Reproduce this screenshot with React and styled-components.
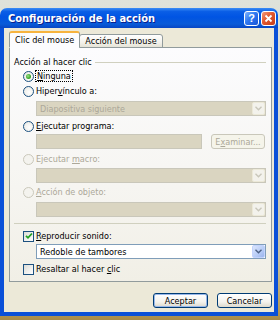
import React from 'react';
import styled, { createGlobalStyle } from 'styled-components';

const GlobalStyle = createGlobalStyle`
  html, body {
    margin: 0;
    padding: 0;
  }
  body {
    width: 280px;
    height: 320px;
    overflow: hidden;
    font-family: "DejaVu Sans Condensed", "Liberation Sans", sans-serif;
    font-size: 9px;
    color: #000;
  }
`;

const Desktop = styled.div`
  width: 280px;
  height: 320px;
  padding-top: 8px;
  box-sizing: border-box;
  background: linear-gradient(180deg, #dfe2da 0%, #d6d9cf 40%, #c9c4a6 80%, #b49a55 97%, #a88a48 100%);
`;

const Window = styled.div`
  width: 278px;
  height: 308px;
  display: flex;
  flex-direction: column;
`;

const TitleBar = styled.div`
  height: 20px;
  flex: none;
  display: flex;
  align-items: center;
  padding: 0 2px 0 8px;
  border-radius: 7px 7px 0 0;
  background: linear-gradient(180deg, #3b8cf5 0%, #0a5ee6 18%, #0054e3 45%, #0a5bd8 80%, #0846c4 100%);
`;

const Title = styled.span`
  flex: 1;
  color: #fff;
  font-weight: bold;
  font-size: 11px;
  text-shadow: 1px 1px 0 #0a1e8c;
`;

const CaptionButton = styled.span`
  width: 15px;
  height: 15px;
  margin-left: 2px;
  box-sizing: border-box;
  border: 1px solid #fff;
  border-radius: 3px;
  display: flex;
  align-items: center;
  justify-content: center;
  color: #fff;
  font-family: "Liberation Sans", sans-serif;
  font-weight: bold;
  font-size: 11px;
  background: ${p => p.$close
    ? 'linear-gradient(135deg, #f19a7c 0%, #e2572e 45%, #c43d18 100%)'
    : 'linear-gradient(135deg, #7fb2ff 0%, #2f78f0 45%, #1a55d8 100%)'};
`;

const Body = styled.div`
  flex: 1;
  display: flex;
  flex-direction: column;
  background: #ece9d8;
  border: 4px solid #0a50d8;
  border-top: none;
  padding: 3px 2px 0 5px;
`;

const TabStrip = styled.div`
  display: flex;
  align-items: flex-end;
  height: 17px;
  position: relative;
  z-index: 1;
  margin-bottom: -1px;
`;

const Tab = styled.div`
  box-sizing: border-box;
  height: ${p => (p.$active ? '17px' : '14px')};
  padding: 0 5px;
  display: flex;
  align-items: center;
  border: 1px solid #919b9c;
  border-bottom: ${p => (p.$active ? '1px solid #fcfcfe' : '1px solid #919b9c')};
  border-top: ${p => (p.$active ? '2px solid #f7b33d' : '1px solid #919b9c')};
  border-radius: 3px 3px 0 0;
  background: ${p => (p.$active ? '#fcfcfe' : 'linear-gradient(180deg, #fff 0%, #f3f2ec 60%, #e5e3d6 100%)')};
  margin-left: ${p => (p.$active ? '0' : '-1px')};
`;

const Panel = styled.div`
  height: 235px;
  box-sizing: border-box;
  border: 1px solid #919b9c;
  background: linear-gradient(180deg, #fcfcfe 0%, #f6f5f1 60%, #f1efe6 100%);
  padding: 9px 5px 0 4px;
`;

const Legend = styled.div`
  display: flex;
  align-items: center;
  height: 10px;
  gap: 3px;
  &::after {
    content: '';
    flex: 1;
    border-top: 1px solid #d0d0bf;
  }
`;

const Group = styled.div`
  display: flex;
  flex-direction: column;
`;

const Option = styled.div`
  display: flex;
  align-items: center;
  height: 14px;
  padding-left: 9px;
  gap: 2px;
  margin-top: ${p => p.$mt || 0}px;
  color: ${p => (p.$disabled ? '#aca899' : '#000')};
`;

const Radio = styled.span`
  width: 11px;
  height: 11px;
  box-sizing: border-box;
  border-radius: 50%;
  border: 1px solid ${p => (p.$disabled ? '#cac8bb' : '#1c5180')};
  background: ${p => (p.$disabled ? '#f4f3ee' : 'radial-gradient(circle at 60% 60%, #fff 0%, #e6e6df 100%)')};
  display: flex;
  align-items: center;
  justify-content: center;
  &::after {
    content: '';
    display: ${p => (p.$checked ? 'block' : 'none')};
    width: 5px;
    height: 5px;
    border-radius: 50%;
    background: radial-gradient(circle at 40% 40%, #9be28a 0%, #3aa72a 60%, #21a121 100%);
  }
`;

const Check = styled.span`
  width: 11px;
  height: 11px;
  box-sizing: border-box;
  border: 1px solid #1c5180;
  background: linear-gradient(135deg, #dcdcd7 0%, #fff 100%);
  display: flex;
  align-items: center;
  justify-content: center;
`;

const Focus = styled.span`
  outline: 1px dotted #000;
  outline-offset: 0;
  padding: 0 1px;
`;

const Field = styled.div`
  box-sizing: border-box;
  height: 15px;
  margin-left: 22px;
  margin-top: ${p => p.$mt || 0}px;
  width: ${p => p.$w || 230}px;
  border: 1px solid ${p => (p.$disabled ? '#c9c7ba' : '#7f9db9')};
  background: ${p => (p.$disabled ? '#dad5c1' : '#fff')};
  color: ${p => (p.$disabled ? '#aca899' : '#000')};
  display: flex;
  align-items: center;
  padding-left: 3px;
`;

const FieldText = styled.span`
  flex: 1;
`;

const DropButton = styled.span`
  width: 13px;
  height: 13px;
  box-sizing: border-box;
  border: 1px solid ${p => (p.$disabled ? '#ece9d8' : '#c3d3fd')};
  border-radius: 2px;
  background: ${p => (p.$disabled ? '#f3f2ec' : 'linear-gradient(135deg, #dce6fd 0%, #b6cbf6 60%, #9bb4ec 100%)')};
  display: flex;
  align-items: center;
  justify-content: center;
`;

const FieldRow = styled.div`
  display: flex;
  align-items: center;
  gap: 9px;
  margin-top: ${p => p.$mt || 0}px;
`;

const Separator = styled.div`
  height: 0;
  border-top: 1px solid #d0d0bf;
  margin: 6px 0 5px 0;
`;

const PushButton = styled.div`
  box-sizing: border-box;
  width: ${p => p.$w || 55}px;
  height: 15px;
  border: 1px solid ${p => (p.$disabled ? '#c9c7ba' : '#003c74')};
  border-radius: 3px;
  display: flex;
  align-items: center;
  justify-content: center;
  color: ${p => (p.$disabled ? '#aca899' : '#000')};
  background: ${p => (p.$disabled ? '#f5f4ea' : 'linear-gradient(180deg, #fff 0%, #f4f3ee 60%, #dcd9cc 100%)')};
  box-shadow: ${p => (p.$default ? 'inset 0 0 0 1px #98b8ea' : 'none')};
`;

const Actions = styled.div`
  display: flex;
  justify-content: flex-end;
  gap: 9px;
  margin-top: 11px;
`;

const Chevron = ({ color }) => (
  <svg width="7" height="5" viewBox="0 0 7 5">
    <path d="M0.5 0.8 L3.5 3.8 L6.5 0.8" fill="none" stroke={color} strokeWidth="1.4" />
  </svg>
);

const Combo = ({ text, disabled, mt }) => (
  <Field $disabled={disabled} $mt={mt}>
    <FieldText>{text}</FieldText>
    <DropButton $disabled={disabled}>
      <Chevron color={disabled ? '#c9c7ba' : '#4d6185'} />
    </DropButton>
  </Field>
);

export default function App() {
  return (
    <Desktop>
      <GlobalStyle />
      <Window>
        <TitleBar>
          <Title>Configuración de la acción</Title>
          <CaptionButton>?</CaptionButton>
          <CaptionButton $close>
            <svg width="9" height="9" viewBox="0 0 9 9">
              <path d="M1.5 1.5 L7.5 7.5 M7.5 1.5 L1.5 7.5" stroke="#fff" strokeWidth="1.8" />
            </svg>
          </CaptionButton>
        </TitleBar>
        <Body>
          <TabStrip>
            <Tab $active>Clic del mouse</Tab>
            <Tab>Acción del mouse</Tab>
          </TabStrip>
          <Panel>
            <Group>
              <Legend>Acción al hacer clic</Legend>
              <Option $mt={2}>
                <Radio $checked />
                <Focus><u>N</u>inguna</Focus>
              </Option>
              <Option $mt={1}>
                <Radio />
                <span>Hiper<u>v</u>ínculo a:</span>
              </Option>
              <Combo text="Diapositiva siguiente" disabled mt={3} />
              <Option $mt={3}>
                <Radio />
                <span><u>E</u>jecutar programa:</span>
              </Option>
              <FieldRow $mt={1}>
                <Field $disabled $w={166} />
                <PushButton $disabled $w={54}>E<u>x</u>aminar...</PushButton>
              </FieldRow>
              <Option $mt={3} $disabled>
                <Radio $disabled />
                <span>Ejecutar <u>m</u>acro:</span>
              </Option>
              <Combo disabled mt={2} />
              <Option $mt={2} $disabled>
                <Radio $disabled />
                <span><u>A</u>cción de objeto:</span>
              </Option>
              <Combo disabled mt={3} />
            </Group>
            <Separator />
            <Group>
              <Option>
                <Check>
                  <svg width="8" height="8" viewBox="0 0 8 8">
                    <path d="M1 3.8 L3 5.8 L7 1.5" fill="none" stroke="#21a121" strokeWidth="1.8" />
                  </svg>
                </Check>
                <span><u>R</u>eproducir sonido:</span>
              </Option>
              <Combo text="Redoble de tambores" mt={1} />
              <Option $mt={3}>
                <Check />
                <span>Resaltar al hacer <u>c</u>lic</span>
              </Option>
            </Group>
          </Panel>
          <Actions>
            <PushButton $default>Aceptar</PushButton>
            <PushButton>Cancelar</PushButton>
          </Actions>
        </Body>
      </Window>
    </Desktop>
  );
}
